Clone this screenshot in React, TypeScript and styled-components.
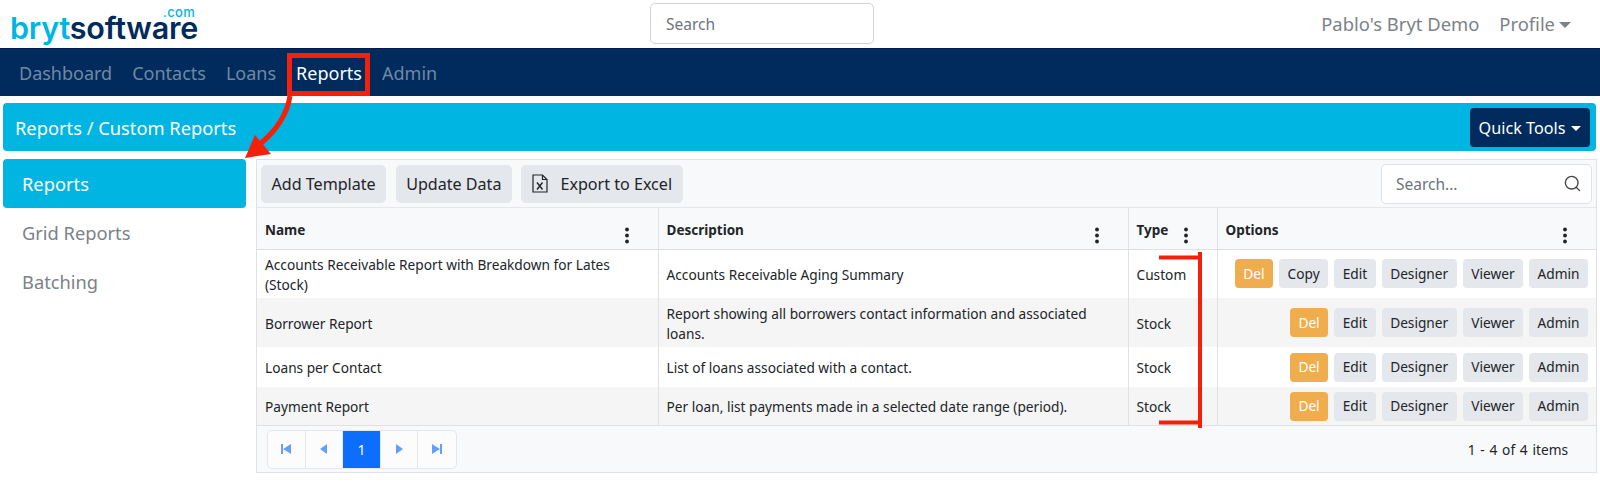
import React from 'react'
import styled, { createGlobalStyle } from 'styled-components'
import { Search } from 'lucide-react'

const GlobalStyle = createGlobalStyle`
  html, body {
    margin: 0;
    padding: 0;
    background: #fff;
  }
  body {
    font-family: "Noto Sans", "Open Sans", sans-serif;
    color: #212529;
    overflow: hidden;
  }
  * {
    box-sizing: border-box;
  }
`

const Page = styled.div`
  position: relative;
  width: 1600px;
  height: 485px;
  overflow: hidden;
`

const Header = styled.header`
  height: 48px;
  display: grid;
  grid-template-columns: 640px 224px 1fr;
  align-items: center;
  padding: 0 29px 0 10px;
  background: #fff;
`

const Logo = styled.div`
  position: relative;
  font-family: "Inter", sans-serif;
  font-size: 30.5px;
  font-weight: 600;
  letter-spacing: -0.2px;
  line-height: 22px;
  padding-top: 7px;
  color: #00b5e2;
`

const LogoDark = styled.span`
  color: #002b5c;
`

const LogoCom = styled.span`
  position: absolute;
  left: 153px;
  top: -3px;
  font-size: 13px;
  font-weight: 500;
  line-height: 11px;
  letter-spacing: 0.3px;
`

const HeaderSearch = styled.div`
  height: 41px;
  margin-top: -1px;
  border: 1px solid #ced4da;
  border-radius: 5px;
  padding: 0 15px;
  display: flex;
  align-items: center;
  font-size: 15.5px;
  color: #6c757d;
`

const HeaderRight = styled.div`
  display: flex;
  justify-content: flex-end;
  align-items: center;
  gap: 20px;
  font-size: 18.4px;
  color: #7b8288;
  margin-top: -1px;
`

const Caret = styled.span<{ size: number, space: number }>`
  display: inline-block;
  margin-left: ${props => props.space}px;
  vertical-align: 3px;
  border-top: ${props => props.size}px solid currentColor;
  border-left: ${props => props.size}px solid transparent;
  border-right: ${props => props.size}px solid transparent;
`

const Nav = styled.nav`
  height: 48px;
  background: #002b5c;
  border-top: 1px solid #001a50;
  display: flex;
  align-items: center;
  padding-left: 19px;
  gap: 20px;
`

const NavItem = styled.span<{ active?: boolean }>`
  font-size: 18px;
  color: ${props => props.active ? '#fff' : 'rgba(255,255,255,0.45)'};
`

const TitleBar = styled.div`
  height: 48px;
  margin: 7px 4px 0 3px;
  background: #00b5e2;
  border-radius: 4px;
  display: flex;
  align-items: center;
  justify-content: space-between;
  padding: 0 6px 0 12px;
  color: #fff;
  font-size: 18.3px;
`

const QuickTools = styled.div`
  width: 120px;
  height: 39px;
  padding-top: 2px;
  background: #002b5c;
  border-radius: 4px;
  display: flex;
  align-items: center;
  justify-content: center;
  font-size: 16.2px;
`

const Body = styled.div`
  display: flex;
  margin: 8px 4px 0 3px;
  gap: 10px;
`

const Sidebar = styled.aside`
  width: 243px;
  flex: none;
`

const SideItem = styled.div<{ active?: boolean }>`
  height: 49px;
  display: flex;
  align-items: center;
  padding-left: 19px;
  border-radius: 4px;
  font-size: 18.3px;
  color: ${props => props.active ? '#fff' : '#7b8288'};
  background: ${props => props.active ? '#00b5e2' : 'transparent'};
`

const Panel = styled.section`
  flex: 1;
  height: 314px;
  border: 1px solid #dee2e6;
  background: #f8f9fa;
  display: flex;
  flex-direction: column;
`

const Toolbar = styled.div`
  height: 48px;
  flex: none;
  display: flex;
  align-items: center;
  gap: 9.5px;
  padding: 0 4px 0 4px;
  border-bottom: 1px solid #e4e7eb;
`

const ToolButton = styled.div`
  height: 38px;
  padding: 0 10.5px;
  background: #e4e7eb;
  border-radius: 5px;
  display: flex;
  align-items: center;
  gap: 12.5px;
  font-size: 16.1px;
  color: #212529;
`

const TableSearch = styled.div`
  margin-left: auto;
  width: 211px;
  height: 40px;
  background: #fff;
  border: 1px solid #dee2e6;
  border-radius: 5px;
  display: flex;
  align-items: center;
  justify-content: space-between;
  padding: 0 9px 0 14px;
  font-size: 15.5px;
  color: #6c757d;
`

const Table = styled.table`
  width: 100%;
  table-layout: fixed;
  border-collapse: collapse;
  background: #fff;
  font-size: 13.7px;
`

const HeadCell = styled.th<{ width: number }>`
  width: ${props => props.width}px;
  height: 41px;
  padding: 3px 8px 0;
  background: #f8f9fa;
  border-right: 1px solid #dee2e6;
  border-bottom: 1px solid #dee2e6;
  text-align: left;
  font-weight: 700;
  font-size: 13.5px;
  color: #212529;
  &:last-child {
    border-right: 0;
  }
`

const HeadInner = styled.div`
  display: flex;
  align-items: center;
  justify-content: space-between;
  padding-right: 21px;
`

const KebabIcon = styled.svg`
  margin-top: 11px;
  flex: none;
`

const Row = styled.tr<{ height: number, alt?: boolean }>`
  height: ${props => props.height}px;
  background: ${props => props.alt ? '#f5f5f5' : '#fff'};
`

const Cell = styled.td`
  padding: 2px 8px 0;
  border-right: 1px solid #dee2e6;
  line-height: 20px;
  color: #212529;
  &:last-child {
    border-right: 0;
    padding: 0 8px;
  }
`

const Options = styled.div`
  display: flex;
  justify-content: flex-end;
  gap: 6px;
`

const RowButton = styled.div<{ danger?: boolean }>`
  height: 29px;
  padding: 0 8.5px;
  border-radius: 4px;
  display: flex;
  align-items: center;
  font-size: 13.7px;
  background: ${props => props.danger ? '#f0ad4e' : '#e4e7eb'};
  color: ${props => props.danger ? '#fff' : '#212529'};
`

const Footer = styled.div`
  flex: 1;
  display: flex;
  align-items: center;
  justify-content: space-between;
  padding: 0 28px 0 10px;
  border-top: 1px solid #dee2e6;
  font-size: 13.7px;
  word-spacing: 1.2px;
`

const Pager = styled.div`
  display: flex;
  height: 39px;
  background: #fcfcfd;
  border: 1px solid #e4e7eb;
  border-radius: 5px;
`

const PagerCell = styled.div<{ active?: boolean }>`
  width: 37.6px;
  display: flex;
  align-items: center;
  justify-content: center;
  font-size: 14px;
  border-right: 1px solid #e4e7eb;
  color: ${props => props.active ? '#fff' : '#64a0fb'};
  background: ${props => props.active ? '#0d6efd' : 'transparent'};
  &:last-child {
    border-right: 0;
  }
`

const Overlay = styled.svg`
  position: absolute;
  left: 0;
  top: 0;
  pointer-events: none;
`

const Kebab = () => (
  <KebabIcon width="4" height="17" viewBox="0 0 4 17">
    <circle cx="2" cy="2.5" r="1.9" fill="#212529" />
    <circle cx="2" cy="8.5" r="1.9" fill="#212529" />
    <circle cx="2" cy="14.5" r="1.9" fill="#212529" />
  </KebabIcon>
)

const ExcelIcon = () => (
  <svg width="16" height="19" viewBox="0 0 16 19" fill="none" stroke="#212529" strokeWidth="1.2">
    <path d="M1 1h9.5L15 5.5V18H1z" />
    <path d="M10.5 1v4.5H15" />
    <path d="M5 8.5l5.5 7M10.5 8.5l-5.5 7" strokeWidth="1.4" />
  </svg>
)

const PagerIcon = ({ d }: { d: string }) => (
  <svg width="10" height="10" viewBox="0 0 10 10" fill="currentColor">
    <path d={d} />
  </svg>
)

const reports = [
  { name: 'Accounts Receivable Report with Breakdown for Lates (Stock)', description: 'Accounts Receivable Aging Summary', type: 'Custom', height: 49, alt: false },
  { name: 'Borrower Report', description: 'Report showing all borrowers contact information and associated loans.', type: 'Stock', height: 49, alt: true },
  { name: 'Loans per Contact', description: 'List of loans associated with a contact.', type: 'Stock', height: 40, alt: false },
  { name: 'Payment Report', description: 'Per loan, list payments made in a selected date range (period).', type: 'Stock', height: 38, alt: true }
]

const App = () => (
  <Page>
    <GlobalStyle />
    <Header>
      <Logo>
        bryt<LogoDark>software</LogoDark>
        <LogoCom>.com</LogoCom>
      </Logo>
      <HeaderSearch>Search</HeaderSearch>
      <HeaderRight>
        <span>Pablo's Bryt Demo</span>
        <span>Profile<Caret size={6} space={4} /></span>
      </HeaderRight>
    </Header>
    <Nav>
      <NavItem>Dashboard</NavItem>
      <NavItem>Contacts</NavItem>
      <NavItem>Loans</NavItem>
      <NavItem active>Reports</NavItem>
      <NavItem>Admin</NavItem>
    </Nav>
    <TitleBar>
      <span>Reports / Custom Reports</span>
      <QuickTools>Quick Tools<Caret size={5} space={6} /></QuickTools>
    </TitleBar>
    <Body>
      <Sidebar>
        <SideItem active>Reports</SideItem>
        <SideItem>Grid Reports</SideItem>
        <SideItem>Batching</SideItem>
      </Sidebar>
      <Panel>
        <Toolbar>
          <ToolButton>Add Template</ToolButton>
          <ToolButton>Update Data</ToolButton>
          <ToolButton><ExcelIcon />Export to Excel</ToolButton>
          <TableSearch>
            Search...
            <Search size={19} color="#444" strokeWidth={1.7} />
          </TableSearch>
        </Toolbar>
        <Table>
          <thead>
            <tr>
              <HeadCell width={401}><HeadInner><span>Name</span><Kebab /></HeadInner></HeadCell>
              <HeadCell width={470}><HeadInner><span>Description</span><Kebab /></HeadInner></HeadCell>
              <HeadCell width={89}><HeadInner><span>Type</span><Kebab /></HeadInner></HeadCell>
              <HeadCell width={379}><HeadInner><span>Options</span><Kebab /></HeadInner></HeadCell>
            </tr>
          </thead>
          <tbody>
            {reports.map(report => (
              <Row key={report.name} height={report.height} alt={report.alt}>
                <Cell>{report.name}</Cell>
                <Cell>{report.description}</Cell>
                <Cell>{report.type}</Cell>
                <Cell>
                  <Options>
                    <RowButton danger>Del</RowButton>
                    {report.type === 'Custom' && <RowButton>Copy</RowButton>}
                    <RowButton>Edit</RowButton>
                    <RowButton>Designer</RowButton>
                    <RowButton>Viewer</RowButton>
                    <RowButton>Admin</RowButton>
                  </Options>
                </Cell>
              </Row>
            ))}
          </tbody>
        </Table>
        <Footer>
          <Pager>
            <PagerCell><PagerIcon d="M0 0h2v10H0zM10 0v10L2 5z" /></PagerCell>
            <PagerCell><PagerIcon d="M8 0v10L1 5z" /></PagerCell>
            <PagerCell active>1</PagerCell>
            <PagerCell><PagerIcon d="M2 0v10l7-5z" /></PagerCell>
            <PagerCell><PagerIcon d="M0 0v10l8-5zM8 0h2v10H8z" /></PagerCell>
          </Pager>
          <span>1 - 4 of 4 items</span>
        </Footer>
      </Panel>
    </Body>
    <Overlay width="1600" height="485" viewBox="0 0 1600 485">
      <rect x="289.5" y="55.5" width="78" height="38" fill="none" stroke="#f5200a" strokeWidth="5" />
      <path d="M290 96C287 115 277 130 260 144" fill="none" stroke="#f5200a" strokeWidth="5" />
      <path d="M245 158L255 135L271 154Z" fill="#f5200a" />
      <path d="M1159 257.5H1200M1200 252V428M1159 422.5H1200" fill="none" stroke="#f5200a" strokeWidth="4" />
    </Overlay>
  </Page>
)

export default App
